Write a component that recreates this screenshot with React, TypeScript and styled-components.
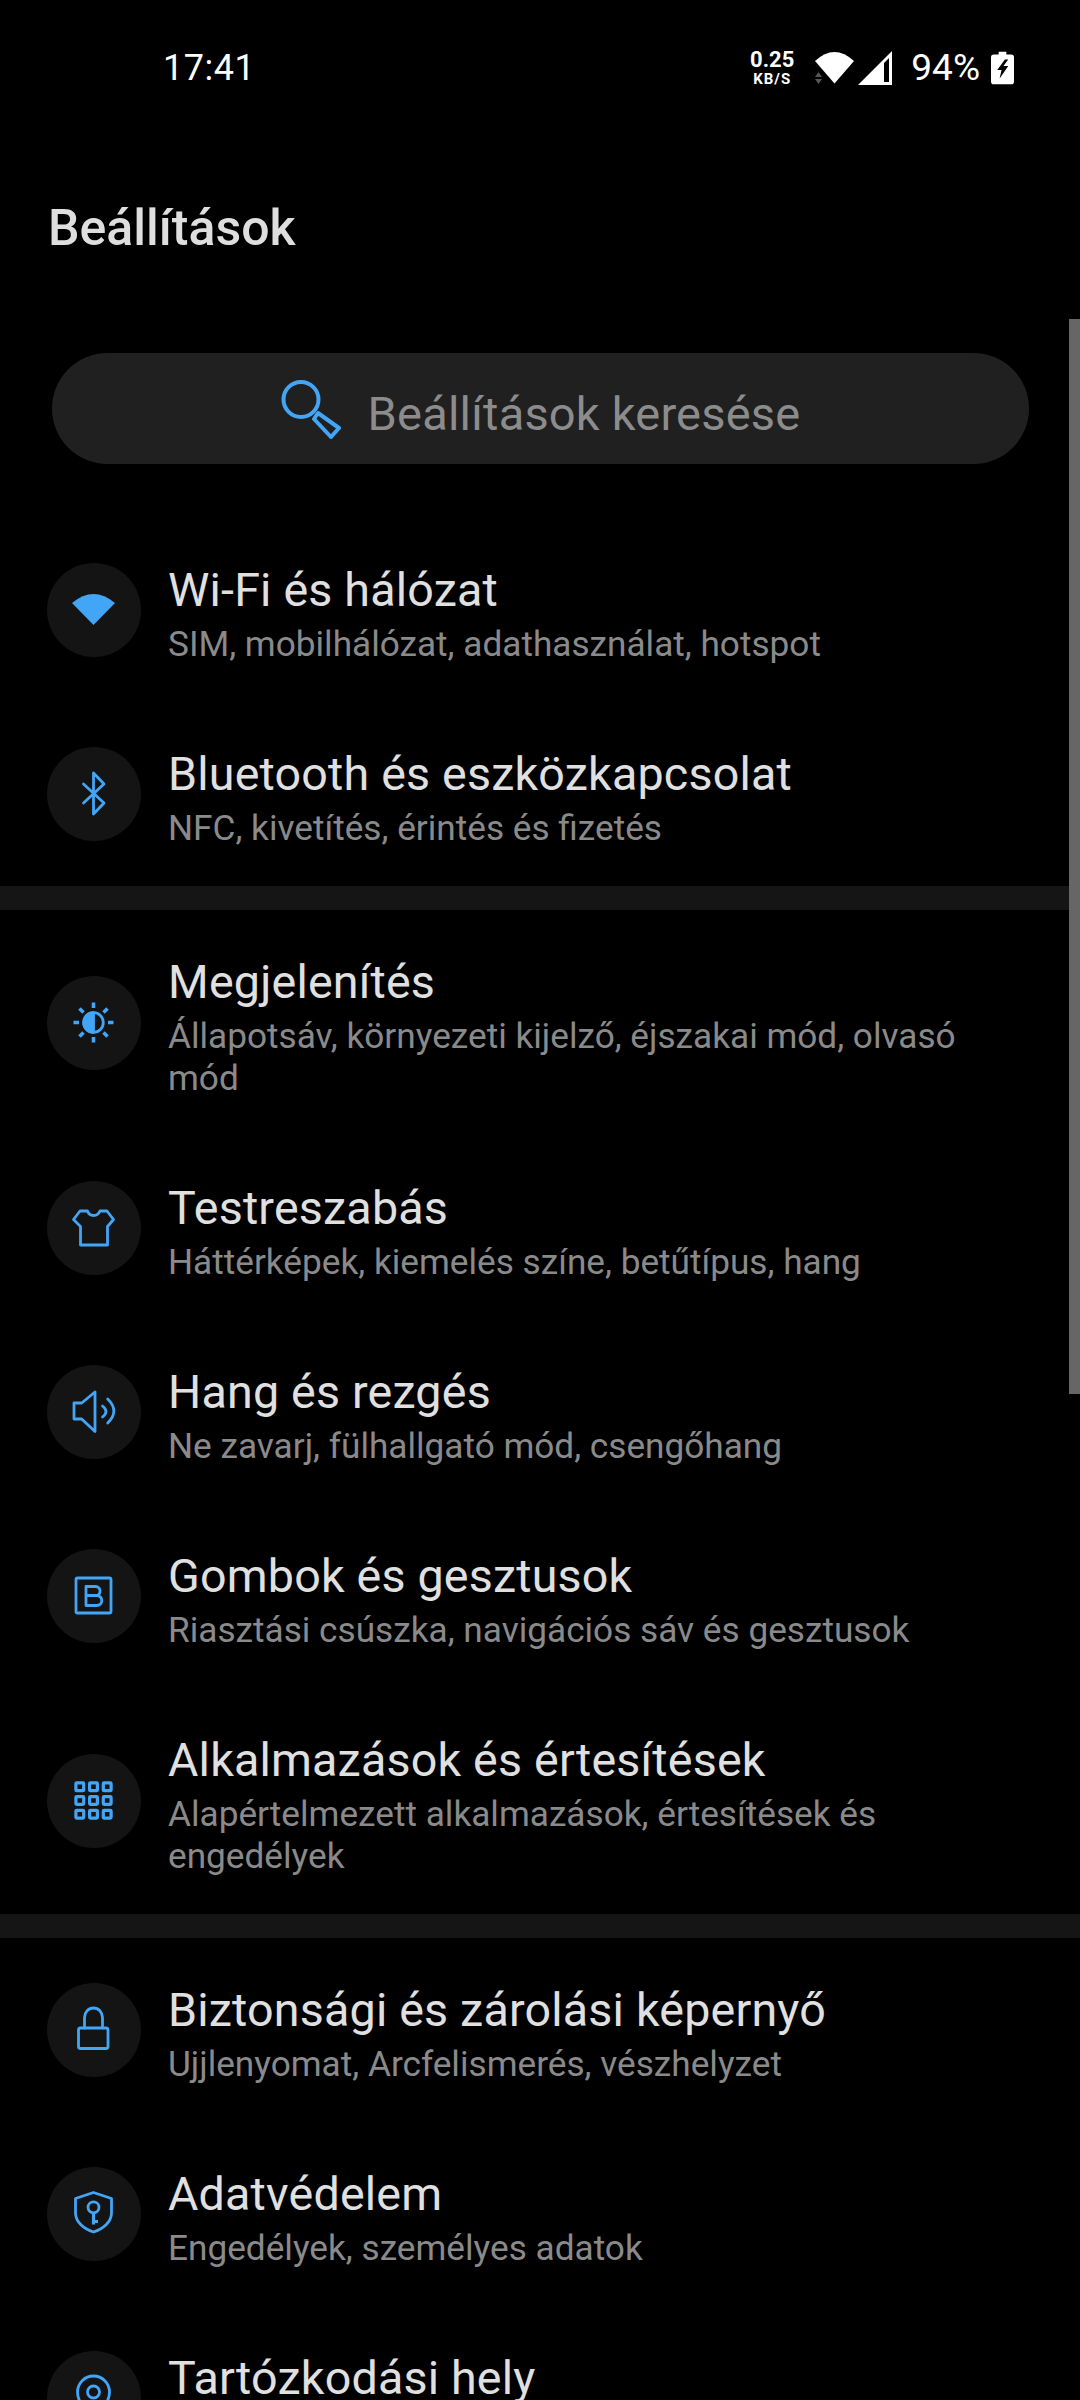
import React from 'react'
import styled, { createGlobalStyle } from 'styled-components'

const GlobalStyle = createGlobalStyle`
  html, body {
    margin: 0;
    padding: 0;
    background: #000;
  }
  body {
    font-family: Roboto, "Noto Sans", sans-serif;
  }
`

const BLUE = '#42a5f5'

const Screen = styled.div`
  position: relative;
  width: 1080px;
  height: 2400px;
  overflow: hidden;
  background: #000;
`

const ScrollThumb = styled.div`
  position: absolute;
  top: 319px;
  right: 0;
  width: 11px;
  height: 1075px;
  background: #666;
`

const StatusBar = styled.div`
  height: 134px;
  box-sizing: border-box;
  padding: 45px 66px 0 163px;
  display: flex;
  justify-content: space-between;
  align-items: flex-start;
  color: #fff;
`

const Clock = styled.span`
  font-size: 36px;
  line-height: 46px;
  letter-spacing: 0.5px;
`

const StatusIcons = styled.div`
  display: flex;
  align-items: center;
  height: 46px;
`

const NetSpeed = styled.div`
  display: flex;
  flex-direction: column;
  align-items: center;
  font-weight: 700;
  margin-right: 20px;
`

const NetValue = styled.span`
  font-size: 22px;
  line-height: 22px;
`

const NetUnit = styled.span`
  font-size: 15px;
  line-height: 16px;
  letter-spacing: 1px;
`

const SignalIcon = styled.svg`
  margin-left: 2px;
`

const Percent = styled.span`
  font-size: 37px;
  line-height: 46px;
  margin: 0 11px 0 18px;
`

const PageTitle = styled.h1`
  margin: 0;
  padding-left: 48px;
  height: 219px;
  font-size: 50px;
  line-height: 188px;
  font-weight: 500;
  color: #dedede;
`

const SearchBar = styled.div`
  margin: 0 51px 0 52px;
  height: 111px;
  box-sizing: border-box;
  border-radius: 56px;
  background: #202020;
  display: flex;
  align-items: center;
  justify-content: center;
  gap: 27px;
`

const SearchText = styled.span`
  font-size: 47px;
  line-height: 56px;
  padding-top: 10px;
  color: #8c8c8c;
  letter-spacing: 0.2px;
`

const Section = styled.section<{ $top: number }>`
  padding-top: ${(p) => p.$top}px;
`

const Divider = styled.div`
  height: 24px;
  background: #151515;
`

const Row = styled.div<{ $tall?: boolean }>`
  height: ${(p) => (p.$tall ? 226 : 184)}px;
  box-sizing: border-box;
  display: flex;
  align-items: center;
  padding: 0 80px 0 47px;
`

const IconCircle = styled.div`
  width: 94px;
  height: 94px;
  border-radius: 50%;
  background: #141414;
  flex: none;
  display: flex;
  align-items: center;
  justify-content: center;
  margin-right: 27px;
`

const RowText = styled.div`
  display: flex;
  flex-direction: column;
  min-width: 0;
  min-height: 109px;
  box-sizing: border-box;
  padding-top: 6px;
`

const RowTitle = styled.div`
  font-size: 46.6px;
  line-height: 56px;
  color: #e0e0e0;
  letter-spacing: 0.2px;
`

const RowSub = styled.div`
  font-size: 35.2px;
  line-height: 42px;
  color: #8a8a8a;
  margin-top: 5px;
`

const Glyph: React.FC<{ children: React.ReactNode; fill?: boolean }> = ({ children, fill }) => (
  <svg
    width="50"
    height="50"
    viewBox="0 0 50 50"
    fill={fill ? BLUE : 'none'}
    stroke={fill ? 'none' : BLUE}
    strokeWidth="2.8"
    strokeLinecap="round"
    strokeLinejoin="round"
  >
    {children}
  </svg>
)

const WifiIcon = () => (
  <Glyph fill>
    <path d="M3 18 Q24.5 0 46 18 L24.5 40 Z" />
  </Glyph>
)

const BluetoothIcon = () => (
  <Glyph>
    <path d="M14.5 15 L35 34 L24.5 45 V4 L35 15 L14.5 34" />
  </Glyph>
)

const DisplayIcon = () => (
  <Glyph>
    <circle cx="24.5" cy="24.5" r="9.8" />
    <path d="M24.5 14.7 A9.8 9.8 0 0 0 24.5 34.3 Z" fill={BLUE} />
    <path
      d="M24.5 4.5 V10 M24.5 39 V44.5 M4.5 24.5 H10 M39 24.5 H44.5 M10.5 10.5 L14.5 14.5 M38.5 10.5 L34.5 14.5 M10.5 38.5 L14.5 34.5 M38.5 38.5 L34.5 34.5"
      strokeWidth="3.6"
      strokeLinecap="butt"
    />
  </Glyph>
)

const ShirtIcon = () => (
  <Glyph>
    <path d="M11 8 H18.5 C20.5 14 28.5 14 31 8 H38 L44.5 16.5 L38.5 23.5 V42 H11.5 V23.5 L4.5 16.5 Z" />
  </Glyph>
)

const SoundIcon = () => (
  <Glyph>
    <path d="M5 16 H12.7 L26 5 V44.5 L12.7 32 H5 Z" />
    <path d="M33.5 19 Q40.5 24.5 33.5 30 M38.7 12 Q51 24 38.7 36" />
  </Glyph>
)

const ButtonsIcon = () => (
  <Glyph>
    <rect x="7" y="7" width="35" height="35" rx="1.5" />
    <path d="M17 15.5 V34.5 H27.5 C34.5 34.5 34.5 24.5 27.5 24.5 H17 M27 24.5 C32.5 24.5 32.5 15.5 26.5 15.5 H17" />
  </Glyph>
)

const AppsIcon = () => (
  <Glyph>
    {[6.9, 20.6, 34.3].flatMap((y) =>
      [6.9, 20.6, 34.3].map((x) => (
        <rect key={`${x}-${y}`} x={x} y={y} width="7.8" height="7.8" rx="0.8" strokeWidth="3.2" />
      ))
    )}
  </Glyph>
)

const LockIcon = () => (
  <Glyph>
    <rect x="9.5" y="23" width="29.5" height="20.5" rx="2" />
    <path d="M15.5 23 V12.5 A9 9.5 0 0 1 33.5 12.5 V23" />
  </Glyph>
)

const ShieldIcon = () => (
  <Glyph>
    <path d="M24.5 3.5 L42.5 9.5 V24 C42.5 33 34 40 24.5 43 C15 40 6.5 33 6.5 24 V9.5 Z" />
    <circle cx="24.5" cy="18.3" r="5.5" />
    <path d="M24.5 24 V35.5 M24.5 32.5 H29" strokeWidth="3.2" strokeLinecap="butt" />
  </Glyph>
)

const LocationIcon = () => (
  <Glyph>
    <path d="M24.5 46 C16 38 8.5 29 8.5 19 A16 16 0 0 1 40.5 19 C40.5 29 33 38 24.5 46 Z" />
    <circle cx="24.5" cy="19" r="6" />
  </Glyph>
)

interface Item {
  title: string
  sub?: string
  icon: React.ReactNode
  tall?: boolean
}

const groups: { top: number; items: Item[] }[] = [
  {
    top: 54,
    items: [
      { title: 'Wi-Fi és hálózat', sub: 'SIM, mobilhálózat, adathasználat, hotspot', icon: <WifiIcon /> },
      { title: 'Bluetooth és eszközkapcsolat', sub: 'NFC, kivetítés, érintés és fizetés', icon: <BluetoothIcon /> },
    ],
  },
  {
    top: 0,
    items: [
      { title: 'Megjelenítés', sub: 'Állapotsáv, környezeti kijelző, éjszakai mód, olvasó mód', icon: <DisplayIcon />, tall: true },
      { title: 'Testreszabás', sub: 'Háttérképek, kiemelés színe, betűtípus, hang', icon: <ShirtIcon /> },
      { title: 'Hang és rezgés', sub: 'Ne zavarj, fülhallgató mód, csengőhang', icon: <SoundIcon /> },
      { title: 'Gombok és gesztusok', sub: 'Riasztási csúszka, navigációs sáv és gesztusok', icon: <ButtonsIcon /> },
      { title: 'Alkalmazások és értesítések', sub: 'Alapértelmezett alkalmazások, értesítések és engedélyek', icon: <AppsIcon />, tall: true },
    ],
  },
  {
    top: 0,
    items: [
      { title: 'Biztonsági és zárolási képernyő', sub: 'Ujjlenyomat, Arcfelismerés, vészhelyzet', icon: <LockIcon /> },
      { title: 'Adatvédelem', sub: 'Engedélyek, személyes adatok', icon: <ShieldIcon /> },
      { title: 'Tartózkodási hely', icon: <LocationIcon /> },
    ],
  },
]

const App: React.FC = () => (
  <Screen>
    <GlobalStyle />
    <StatusBar>
      <Clock>17:41</Clock>
      <StatusIcons>
        <NetSpeed>
          <NetValue>0.25</NetValue>
          <NetUnit>KB/S</NetUnit>
        </NetSpeed>
        <svg width="41" height="34" viewBox="0 0 41 34">
          <path d="M1 10 Q20.5 -8 40 10 L20.5 32.5 Z" fill="#fff" />
          <path d="M1 26 L4.5 21 L8 26 Z M1 28 L4.5 33 L8 28 Z" fill="#555" />
        </svg>
        <SignalIcon width="36" height="36" viewBox="0 0 36 36">
          <path d="M1 35 L35 1 V35 Z M27 32 H32 V8 L27 13 Z" fill="#fff" fillRule="evenodd" />
        </SignalIcon>
        <Percent>94%</Percent>
        <svg width="23" height="34" viewBox="0 0 24 34">
          <path d="M8 0 H16 V3 H21 Q24 3 24 6 V31 Q24 34 21 34 H3 Q0 34 0 31 V6 Q0 3 3 3 H8 Z" fill="#fff" />
          <path d="M14.5 8 L6.5 19 H11 L9 28 L18 15 H13 L18 8 Z" fill="#000" />
        </svg>
      </StatusIcons>
    </StatusBar>
    <PageTitle>Beállítások</PageTitle>
    <SearchBar>
      <svg width="60" height="60" viewBox="0 0 60 60" fill="none" stroke={BLUE} strokeWidth="4" strokeLinejoin="round">
        <circle cx="20" cy="20.5" r="17.5" />
        <path d="M37 34 L58 49 L50 58 L33 40 Z" />
      </svg>
      <SearchText>Beállítások keresése</SearchText>
    </SearchBar>
    {groups.map((g, i) => (
      <React.Fragment key={g.items[0].title}>
        {i > 0 && <Divider />}
        <Section $top={g.top}>
          {g.items.map((it) => (
            <Row key={it.title} $tall={it.tall}>
              <IconCircle>{it.icon}</IconCircle>
              <RowText>
                <RowTitle>{it.title}</RowTitle>
                {it.sub && <RowSub>{it.sub}</RowSub>}
              </RowText>
            </Row>
          ))}
        </Section>
      </React.Fragment>
    ))}
    <ScrollThumb />
  </Screen>
)

export default App
